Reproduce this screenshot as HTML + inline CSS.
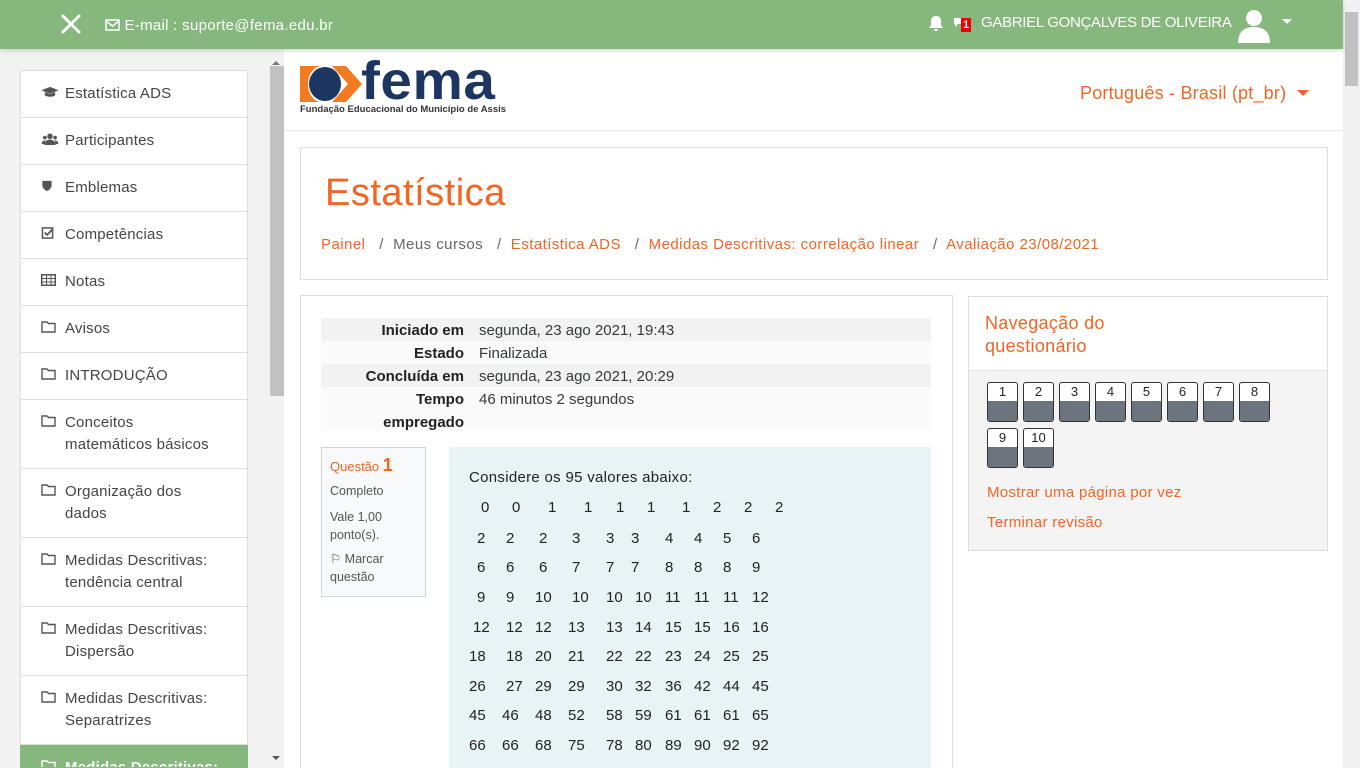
<!DOCTYPE html>
<html style="overflow:hidden;width:1360px;height:768px"><head><meta charset="utf-8"><style>
*{box-sizing:border-box;margin:0;padding:0}
body{width:1360px;height:768px;overflow:hidden;font-family:"Liberation Sans",sans-serif;background:#fff;position:relative;color:#373a3c;font-size:15px}
.a{position:absolute}
.hdr{left:0;top:0;width:1343px;height:49px;background:#86b77c;box-shadow:0 2px 4px rgba(0,0,0,.15);color:#fff;z-index:2}
.side{left:0;top:49px;width:284px;height:719px;background:#f2f2f2}
.item{position:absolute;left:20px;width:228px;background:#fff;border:1px solid #dedede;border-top:none;padding:12px 0 0 44px;line-height:22px;color:#444;font-size:15px;letter-spacing:.2px;overflow:hidden}
.ic{position:absolute;left:20px;top:15px;width:15px;height:12px}
.orange{color:#f26522}
.num span{position:absolute}
.btn{position:absolute;width:31px;height:40px;border:1px solid #333;border-radius:3px;overflow:hidden;background:#fff;font-size:13px;text-align:center;line-height:17px;color:#222}
.btn i{position:absolute;left:0;right:0;bottom:0;height:20px;background:#6c757d}
</style></head><body>
<div class="a hdr">
 <div class="a" style="left:59px;top:12px;font-size:28px;line-height:24px">
 <svg width="24" height="24" viewBox="0 0 24 24"><path d="M3 3L21 21M21 3L3 21" stroke="#fff" stroke-width="3"/></svg></div>
 <div class="a" style="left:105px;top:17px;font-size:15px;letter-spacing:.3px"><svg width="15" height="12" viewBox="0 0 15 12" style="vertical-align:-1px"><rect x="1" y="1" width="13" height="10" fill="none" stroke="#fff" stroke-width="1.5"/><path d="M1 2l6.5 5 6.5-5" fill="none" stroke="#fff" stroke-width="1.5"/></svg> E-mail : suporte@fema.edu.br</div>
 <svg class="a" style="left:928px;top:15px" width="16" height="17" viewBox="0 0 16 17"><path d="M8 1c-3 0-5 2-5 5v4l-2 3h14l-2-3V6c0-3-2-5-5-5zM6 14a2 2 0 004 0z" fill="#fff"/></svg>
 <svg class="a" style="left:953px;top:17px" width="10" height="14" viewBox="0 0 10 14"><path d="M1 1h8v6H5l-3 3V7H1z" fill="#fff"/></svg>
 <div class="a" style="left:961px;top:18px;width:10px;height:14px;background:#e00;font-size:11px;line-height:14px;text-align:center;font-weight:bold">1</div>
 <div class="a" style="left:981px;top:14px;font-size:15px;letter-spacing:-.3px">GABRIEL GONÇALVES DE OLIVEIRA</div>
 <svg class="a" style="left:1236px;top:7px" width="36" height="36" viewBox="0 0 36 36"><circle cx="18" cy="11" r="8" fill="#fff"/><path d="M2 36c0-12 7-16 16-16s16 4 16 16z" fill="#fff"/></svg>
 <div class="a" style="left:1282px;top:19px;border:5px solid transparent;border-top-color:#fff"></div>
</div>
<div class="a side"></div>
<div class="a" style="left:270px;top:55px;width:14px;height:713px;background:#f2f2f2"></div>
<div class="a" style="left:270px;top:66px;width:14px;height:330px;background:#c1c1c1"></div>
<div class="a" style="left:1343px;top:0;width:17px;height:768px;background:#f1f1f1"></div>
<div class="a" style="left:1345px;top:12px;width:13px;height:74px;background:#c1c1c1"></div>

<div class="item" style="top:70px;height:48px;border-top:1px solid #dedede">Estatística ADS<svg class="ic" viewBox="0 0 20 14" style="width:20px;left:19px"><path d="M10 1L0 5l10 4 10-4zM4 7v4c3 2 9 2 12 0V7l-6 2.5z" fill="#555"/></svg></div>
<div class="item" style="top:118px;height:47px">Participantes<svg class="ic" viewBox="0 0 18 13" style="width:18px"><circle cx="9" cy="3.5" r="3" fill="#555"/><circle cx="3.5" cy="5" r="2" fill="#555"/><circle cx="14.5" cy="5" r="2" fill="#555"/><path d="M3 13c0-4 3-6 6-6s6 2 6 6zM0 12c0-3 2-4 4-4l-1 4zM18 12c0-3-2-4-4-4l1 4z" fill="#555"/></svg></div>
<div class="item" style="top:165px;height:47px">Emblemas<svg class="ic" viewBox="0 0 12 13" style="width:12px"><path d="M1 1h10v5c0 4-5 6-5 6S1 10 1 6z" fill="#555"/></svg></div>
<div class="item" style="top:212px;height:47px">Competências<svg class="ic" viewBox="0 0 14 13" style="width:14px"><rect x="1" y="1" width="11" height="11" fill="none" stroke="#555" stroke-width="1.6"/><path d="M3.5 6l2.5 2.5 6-6" fill="none" stroke="#555" stroke-width="2"/></svg></div>
<div class="item" style="top:259px;height:47px">Notas<svg class="ic" viewBox="0 0 15 12"><rect x=".75" y=".75" width="13.5" height="10.5" fill="none" stroke="#555" stroke-width="1.5"/><path d="M1 4.5h13M1 8h13M5.5 1v10M10 1v10" stroke="#555"/></svg></div>
<div class="item" style="top:306px;height:47px">Avisos<svg class="ic" viewBox="0 0 15 12"><path d="M1 1h5l1.5 1.5H14V11H1z" fill="none" stroke="#555" stroke-width="1.4"/></svg></div>
<div class="item" style="top:353px;height:47px">INTRODUÇÃO<svg class="ic" viewBox="0 0 15 12"><path d="M1 1h5l1.5 1.5H14V11H1z" fill="none" stroke="#555" stroke-width="1.4"/></svg></div>
<div class="item" style="top:400px;height:69px">Conceitos<br>matemáticos básicos<svg class="ic" viewBox="0 0 15 12"><path d="M1 1h5l1.5 1.5H14V11H1z" fill="none" stroke="#555" stroke-width="1.4"/></svg></div>
<div class="item" style="top:469px;height:69px">Organização dos<br>dados<svg class="ic" viewBox="0 0 15 12"><path d="M1 1h5l1.5 1.5H14V11H1z" fill="none" stroke="#555" stroke-width="1.4"/></svg></div>
<div class="item" style="top:538px;height:69px">Medidas Descritivas:<br>tendência central<svg class="ic" viewBox="0 0 15 12"><path d="M1 1h5l1.5 1.5H14V11H1z" fill="none" stroke="#555" stroke-width="1.4"/></svg></div>
<div class="item" style="top:607px;height:69px">Medidas Descritivas:<br>Dispersão<svg class="ic" viewBox="0 0 15 12"><path d="M1 1h5l1.5 1.5H14V11H1z" fill="none" stroke="#555" stroke-width="1.4"/></svg></div>
<div class="item" style="top:676px;height:69px">Medidas Descritivas:<br>Separatrizes<svg class="ic" viewBox="0 0 15 12"><path d="M1 1h5l1.5 1.5H14V11H1z" fill="none" stroke="#555" stroke-width="1.4"/></svg></div>
<div class="item" style="top:745px;height:23px;background:#86b77c;color:#fff;font-weight:bold;border-color:#86b77c">Medidas Descritivas:<svg class="ic" viewBox="0 0 15 12"><path d="M1 1h5l1.5 1.5H14V11H1z" fill="none" stroke="#fff" stroke-width="1.4"/></svg></div>
<div class="a" style="left:272px;top:57px;border:4px solid transparent;border-bottom-color:#777"></div>
<div class="a" style="left:272px;top:756px;border:4px solid transparent;border-top-color:#555"></div>

<!-- logo -->
<svg class="a" style="left:300px;top:66px" width="62" height="36" viewBox="0 0 62 36"><path d="M0 0h22C14 0 8 8 8 18s6 18 14 18H0z" fill="#f47a20"/><ellipse cx="25" cy="18" rx="16" ry="17" fill="#1d3561"/><path d="M32 0h14l16 18-16 18H32l16-18z" fill="#f47a20"/></svg>
<div class="a" style="left:361px;top:53px;font-size:54px;font-weight:bold;color:#1d3561;letter-spacing:.5px;line-height:56px;transform:scaleX(1.05);transform-origin:left">fema</div>
<div class="a" style="left:300px;top:104px;font-size:9.5px;font-weight:bold;color:#333">Fundação Educacional do Município de Assis</div>
<div class="a orange" style="left:1080px;top:83px;font-size:18px;letter-spacing:.2px">Português - Brasil (pt_br)</div>
<div class="a" style="left:1297px;top:90px;border:6px solid transparent;border-top-color:#f26522"></div>
<div class="a" style="left:284px;top:130px;width:1059px;height:1px;background:#e5e5e5"></div>

<div class="a" style="left:300px;top:147px;width:1028px;height:133px;border:1px solid #dcdcdc"></div>
<div class="a orange" style="left:325px;top:172px;font-size:38px;letter-spacing:.5px">Estatística</div>
<div class="a" style="left:321px;top:236px;font-size:15px;color:#666;white-space:pre;letter-spacing:.45px"><span class="orange">Painel</span>   /  Meus cursos   /  <span class="orange">Estatística ADS</span>   /  <span class="orange">Medidas Descritivas: correlação linear</span>   /  <span class="orange">Avaliação 23/08/2021</span></div>

<div class="a" style="left:300px;top:295px;width:653px;height:480px;border:1px solid #dcdcdc"></div>
<div class="a" style="left:321px;top:318px;width:610px;height:23px;background:#f2f2f2"></div>
<div class="a" style="left:321px;top:341px;width:610px;height:23px;background:#fafafa"></div>
<div class="a" style="left:321px;top:364px;width:610px;height:23px;background:#f2f2f2"></div>
<div class="a" style="left:321px;top:387px;width:610px;height:44px;background:#fafafa"></div>
<div class="a" style="left:321px;top:319px;width:143px;text-align:right;font-weight:bold;line-height:23px;font-size:15px;color:#222">Iniciado em<br>Estado<br>Concluída em<br>Tempo<br>empregado</div>
<div class="a" style="left:479px;top:319px;line-height:23px;font-size:15px">segunda, 23 ago 2021, 19:43<br>Finalizada<br>segunda, 23 ago 2021, 20:29<br>46 minutos 2 segundos</div>

<div class="a" style="left:321px;top:447px;width:105px;height:150px;background:#f8f9fa;border:1px solid #cfd4da;padding:8px 0 0 8px;font-size:12.5px;color:#555;line-height:18px">
<div class="orange" style="font-size:13px">Questão <b style="font-size:18px">1</b></div>
<div style="margin-top:6px">Completo</div>
<div style="margin-top:8px">Vale 1,00<br>ponto(s).</div>
<div style="margin-top:6px">⚐ Marcar<br>questão</div></div>

<div class="a" style="left:449px;top:447px;width:482px;height:330px;background:#e7f3f5"></div>
<div class="a" style="left:469px;top:469px;font-size:15px;color:#222;letter-spacing:.3px">Considere os 95 valores abaixo:</div>
<div class="a num" style="left:0;top:0;font-size:15px;color:#222">
<div class="a" style="top:499px"><span style="left:481px">0</span><span style="left:512px">0</span><span style="left:548px">1</span><span style="left:584px">1</span><span style="left:616px">1</span><span style="left:647px">1</span><span style="left:682px">1</span><span style="left:713px">2</span><span style="left:744px">2</span><span style="left:775px">2</span></div>
<div class="a" style="top:530px"><span style="left:477px">2</span><span style="left:506px">2</span><span style="left:539px">2</span><span style="left:572px">3</span><span style="left:606px">3</span><span style="left:631px">3</span><span style="left:665px">4</span><span style="left:694px">4</span><span style="left:723px">5</span><span style="left:752px">6</span></div>
<div class="a" style="top:559px"><span style="left:477px">6</span><span style="left:506px">6</span><span style="left:539px">6</span><span style="left:572px">7</span><span style="left:606px">7</span><span style="left:631px">7</span><span style="left:665px">8</span><span style="left:694px">8</span><span style="left:723px">8</span><span style="left:752px">9</span></div>
<div class="a" style="top:589px"><span style="left:477px">9</span><span style="left:506px">9</span><span style="left:535px">10</span><span style="left:572px">10</span><span style="left:606px">10</span><span style="left:635px">10</span><span style="left:665px">11</span><span style="left:694px">11</span><span style="left:723px">11</span><span style="left:752px">12</span></div>
<div class="a" style="top:619px"><span style="left:473px">12</span><span style="left:506px">12</span><span style="left:535px">12</span><span style="left:568px">13</span><span style="left:606px">13</span><span style="left:635px">14</span><span style="left:665px">15</span><span style="left:694px">15</span><span style="left:723px">16</span><span style="left:752px">16</span></div>
<div class="a" style="top:648px"><span style="left:469px">18</span><span style="left:506px">18</span><span style="left:535px">20</span><span style="left:568px">21</span><span style="left:606px">22</span><span style="left:635px">22</span><span style="left:665px">23</span><span style="left:694px">24</span><span style="left:723px">25</span><span style="left:752px">25</span></div>
<div class="a" style="top:678px"><span style="left:469px">26</span><span style="left:506px">27</span><span style="left:535px">29</span><span style="left:568px">29</span><span style="left:606px">30</span><span style="left:635px">32</span><span style="left:665px">36</span><span style="left:694px">42</span><span style="left:723px">44</span><span style="left:752px">45</span></div>
<div class="a" style="top:707px"><span style="left:469px">45</span><span style="left:502px">46</span><span style="left:535px">48</span><span style="left:568px">52</span><span style="left:606px">58</span><span style="left:635px">59</span><span style="left:665px">61</span><span style="left:694px">61</span><span style="left:723px">61</span><span style="left:752px">65</span></div>
<div class="a" style="top:737px"><span style="left:469px">66</span><span style="left:502px">66</span><span style="left:535px">68</span><span style="left:568px">75</span><span style="left:606px">78</span><span style="left:635px">80</span><span style="left:665px">89</span><span style="left:694px">90</span><span style="left:723px">92</span><span style="left:752px">92</span></div>
</div>

<div class="a" style="left:968px;top:296px;width:360px;height:255px;border:1px solid #dcdcdc;background:#f4f4f4"></div>
<div class="a" style="left:969px;top:297px;width:358px;height:74px;background:#fff;border-bottom:1px solid #e3e3e3"></div>
<div class="a orange" style="left:985px;top:312px;font-size:18px;line-height:23px;letter-spacing:.3px">Navegação do<br>questionário</div>
<div class="btn" style="left:987px;top:382px">1<i></i></div>
<div class="btn" style="left:1023px;top:382px">2<i></i></div>
<div class="btn" style="left:1059px;top:382px">3<i></i></div>
<div class="btn" style="left:1095px;top:382px">4<i></i></div>
<div class="btn" style="left:1131px;top:382px">5<i></i></div>
<div class="btn" style="left:1167px;top:382px">6<i></i></div>
<div class="btn" style="left:1203px;top:382px">7<i></i></div>
<div class="btn" style="left:1239px;top:382px">8<i></i></div>
<div class="btn" style="left:987px;top:428px">9<i></i></div>
<div class="btn" style="left:1023px;top:428px">10<i></i></div>
<div class="a orange" style="left:987px;top:484px;font-size:15px;letter-spacing:.3px">Mostrar uma página por vez</div>
<div class="a orange" style="left:987px;top:514px;font-size:15px;letter-spacing:.3px">Terminar revisão</div>
</body></html>
